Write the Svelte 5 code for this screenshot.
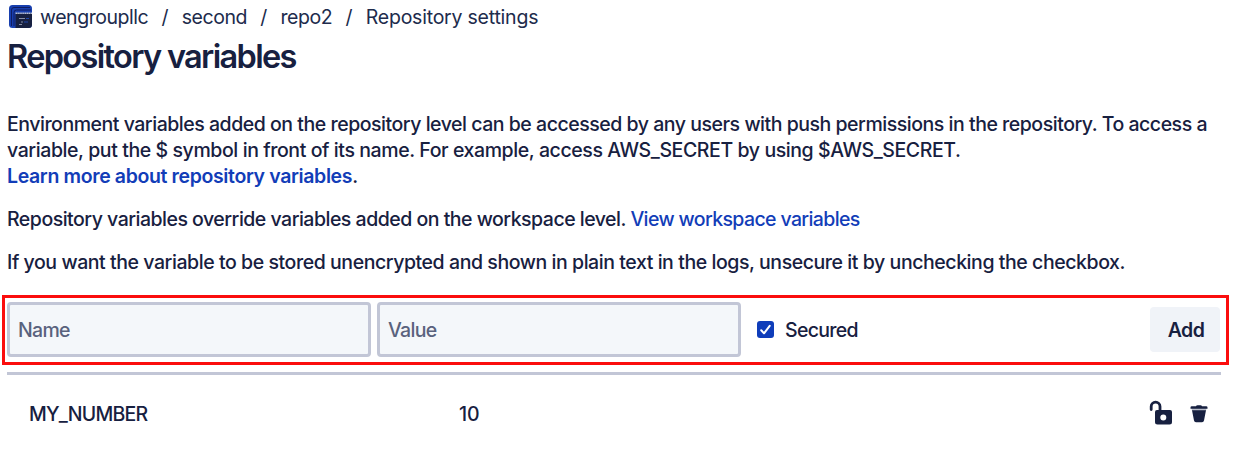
<script>
  let name = $state('');
  let value = $state('');
  let secured = $state(true);
  const crumbs = ['wengroupllc', 'second', 'repo2', 'Repository settings'];
  const variables = [{ name: 'MY_NUMBER', value: '10' }];
</script>

<main>
  <nav>
    <svg class="avatar" viewBox="0 0 23 23" width="23" height="23" aria-hidden="true">
      <rect width="23" height="23" rx="3.5" fill="#183fae" />
      <path d="M2.500 21V5Q2.500 2.500 5 2.500H21M5 21V7.500Q5 5 7.500 5H22" fill="none" stroke="#101c60" stroke-width="1" />
      <path d="M6.500 8.500H23V19.500Q23 23 19.500 23H6.500Z" fill="#172040" />
      <path d="M6.500 8.200H23" stroke="#b4bbcd" stroke-width="1.600" stroke-dasharray="1.500 .4" />
      <path d="M10 13.500H16M12 17H14M10 19.500H13" stroke="#a3abc0" stroke-width=".8" />
      <path d="M17 13.500H20M15 17H19" stroke="#2452c4" stroke-width=".8" />
    </svg>
    {#each crumbs as crumb, i}
      {#if i}<span class="slash">/</span>{/if}
      <span class="crumb">{crumb}</span>
    {/each}
  </nav>
  <h1>Repository variables</h1>

  <p class="intro">
    <span class="l1">Environment variables added on the repository level can be accessed by any users with push permissions in the repository. To access a</span><br />
    <span class="l2">variable, put the $ symbol in front of its name. For example, access AWS_SECRET by using $AWS_SECRET.</span><br />
    <span class="l3"><a class="strong" href="#learn">Learn more about repository variables</a>.</span>
  </p>
  <p><span class="l4">Repository variables override variables added on the workspace level. <a href="#workspace">View workspace variables</a></span></p>
  <p><span class="l5">If you want the variable to be stored unencrypted and shown in plain text in the logs, unsecure it by unchecking the checkbox.</span></p>

  <form onsubmit={(e) => e.preventDefault()}>
    <input class="field" placeholder="Name" aria-label="Name" bind:value={name} />
    <input class="field" placeholder="Value" aria-label="Value" bind:value={value} />
    <label>
      <input type="checkbox" bind:checked={secured} />
      <svg class="check" viewBox="0 0 17 17" width="17" height="17" aria-hidden="true">
        <rect width="17" height="17" rx="3" fill="#0f3dba" />
        {#if secured}<path d="M4.200 9.300L7 12.300L12.700 4.800" fill="none" stroke="#fff" stroke-width="2" stroke-linecap="round" stroke-linejoin="round" />{/if}
      </svg>
      <span class="secured">Secured</span>
    </label>
    <button>Add</button>
  </form>

  <section>
    {#each variables as v}
      <div class="row">
        <span class="key">{v.name}</span>
        <span class="val">{v.value}</span>
        <svg class="lock" viewBox="0 0 24 26" width="24" height="26" aria-label="Unsecured">
          <path d="M2.200 9.500V6.500A4.400 4.400 0 0 1 11 6.500V11" fill="none" stroke="#172040" stroke-width="2.800" stroke-linecap="round" />
          <path fill-rule="evenodd" fill="#172040" d="M8 10H21Q23 10 23 12V22Q23 24.500 20.500 24.500H8.500Q6 24.500 6 22V12Q6 10 8 10ZM14.300 14.400A3 3 0 1 0 14.300 20.400A3 3 0 1 0 14.300 14.400Z" />
        </svg>
        <svg class="trash" viewBox="0 0 18 18" width="18" height="18" aria-label="Delete">
          <path fill="#b9bdca" d="M1.500 3H16.500L16 6H2Z" />
          <path fill="#172040" d="M.5 2.500Q.5 1.300 1.800 1.300H6Q6.300 .2 7.500 .2H10.500Q11.700 .2 12 1.300H16.200Q17.500 1.300 17.500 2.500V3.800H.5ZM2 5.300H16L14 15.500Q13.700 17.200 12 17.200H6Q4.300 17.200 4 15.500Z" />
        </svg>
      </div>
    {/each}
  </section>
</main>

<style>
  :global(body) { background: #fff; }
  main {
    box-sizing: border-box;
    width: 1236px;
    height: 449px;
    overflow: hidden;
    padding: 4px 0 0 7px;
    color: #172040;
    font: 450 19.5px/26px Inter, 'Liberation Sans', sans-serif;
    white-space: nowrap;
  }
  nav { display: flex; align-items: center; height: 25px; font-weight: 400; color: #202b4c; }
  .avatar { margin: 0 8px 0 2px; }
  .crumb { letter-spacing: -0.45px; }
  .crumb:last-child { letter-spacing: -0.22px; }
  .slash { width: 33.5px; text-align: center; }
  h1 { margin: 7px 0 0; font-size: 32.5px; line-height: 42px; font-weight: 600; letter-spacing: -1.65px; }
  p { margin: 17px 0 0; }
  .intro { margin-top: 33px; }
  .l1 { letter-spacing: -0.472px; }
  .l2 { letter-spacing: -0.41px; }
  .l3 { letter-spacing: -0.37px; }
  .l4 { letter-spacing: -0.5px; }
  .l4 a { letter-spacing: -0.62px; }
  .l5 { letter-spacing: -0.435px; }
  a { color: #123db8; text-decoration: none; }
  .strong { font-weight: 600; }
  form {
    box-sizing: border-box;
    display: flex;
    align-items: center;
    width: 1227px;
    height: 70px;
    margin: 20px 0 0 -5px;
    padding: 0 6px 0 2px;
    border: 3px solid #fb0d0d;
  }
  .field {
    box-sizing: border-box;
    width: 364px;
    height: 55px;
    margin: -1px 6px 0 0;
    padding: 1px 8px 0;
    border: 3px solid #c2c6d6;
    border-radius: 4px;
    background: #f4f7fa;
    color: #172040;
    font: inherit;
    letter-spacing: -0.7px;
    outline: 0;
  }
  .field::placeholder { color: #59627d; opacity: 1; }
  label { display: flex; align-items: center; margin-left: 10px; }
  label input { appearance: none; width: 0; height: 0; margin: 0; }
  .check { margin: -1px 11px 0 0; }
  .secured { letter-spacing: -0.7px; }
  button {
    width: 70px;
    height: 45px;
    margin: -1px 0 0 auto;
    padding: 0 0 0 2px;
    border: 0;
    border-radius: 4px;
    background: #f0f3f8;
    color: #172040;
    font: inherit;
    font-weight: 600;
    letter-spacing: -0.6px;
  }
  section { width: 1214px; margin-top: 7px; border-top: 3px solid #c2c6d6; }
  .row { display: flex; align-items: center; height: 78px; padding-left: 22px; }
  .key { width: 430px; letter-spacing: -0.75px; }
  .lock { margin: 0 0 2px auto; }
  .trash { margin: 0 13px 0 17px; }
</style>
